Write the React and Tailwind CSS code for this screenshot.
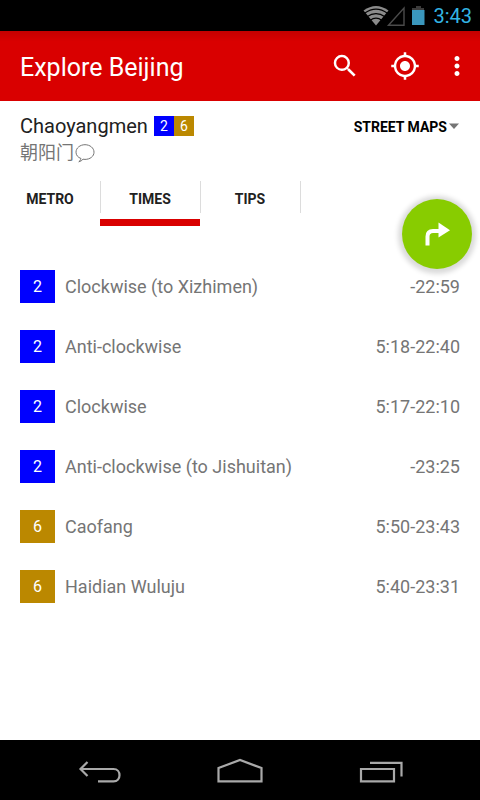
import React, { useState } from "react";
import { MdSearch, MdMyLocation, MdMoreVert } from "react-icons/md";

const TIMES = [
  { line: 2, name: "Clockwise (to Xizhimen)", hours: "-22:59" },
  { line: 2, name: "Anti-clockwise", hours: "5:18-22:40" },
  { line: 2, name: "Clockwise", hours: "5:17-22:10" },
  { line: 2, name: "Anti-clockwise (to Jishuitan)", hours: "-23:25" },
  { line: 6, name: "Caofang", hours: "5:50-23:43" },
  { line: 6, name: "Haidian Wuluju", hours: "5:40-23:31" },
];

const LINE_COLORS = { 2: "bg-[#0000ff]", 6: "bg-[#bb8800]" };

function StatusBar() {
  return (
    <div className="flex h-[31px] items-center justify-end bg-black pr-2 text-[#33b5e5]">
      <svg className="h-8 w-[64px]" viewBox="0 0 64 32" aria-hidden="true">
        <path d="M2.500 10.500 Q15 1.500 27.500 10.500 L15 25.500Z" fill="#8b8b8b" />
        <path d="M3.500 13.200 Q15 5 26.500 13.200 M6 16.800 Q15 10.500 24 16.800 M9 20.400 Q15 16 21 20.400" fill="none" stroke="#000" strokeWidth="1.200" />
        <path d="M27.500 25.300 L43 8 V25.300Z" fill="none" stroke="#4b4b4b" strokeWidth="1.400" />
        <path d="M55 6h5v2h3v2H51V8h4z" fill="#3c3c3c" />
        <path d="M51 10h12.500v15H51z" fill="#3a97bd" />
      </svg>
      <span className="ml-2 text-[20px] leading-8">3:43</span>
    </div>
  );
}

function Header() {
  return (
    <header className="flex h-[70px] items-center bg-linear-to-b from-[#c40000] to-[#d90000] to-15% pr-2 pl-5 text-white">
      <h1 className="flex-1 pt-1 text-[25px] leading-8">Explore Beijing</h1>
      <button type="button" aria-label="Search" className="mr-[30px]">
        <MdSearch size={30} />
      </button>
      <button type="button" aria-label="My location" className="mr-[22px]">
        <MdMyLocation size={30} />
      </button>
      <button type="button" aria-label="More options">
        <MdMoreVert size={30} />
      </button>
    </header>
  );
}

function Station() {
  return (
    <section className="flex items-start justify-between px-5 pt-3">
      <div>
        <div className="flex h-[26px] items-center">
          <h2 className="mr-[6px] text-[20px] leading-6 text-[#212121]">Chaoyangmen</h2>
          <span className="h-5 w-5 bg-[#0000ff] text-center text-[14px] leading-5 text-white">2</span>
          <span className="h-5 w-5 bg-[#bb8800] text-center text-[14px] leading-5 text-white">6</span>
        </div>
        <div className="flex h-7 items-center text-[#757575]">
          <span className="text-[18px] leading-7" lang="zh">朝阳门</span>
          <button type="button" aria-label="Pronounce" className="ml-px">
            <svg width="20" height="20" viewBox="0 0 20 20" fill="none" stroke="currentColor" strokeWidth="1" aria-hidden="true">
              <path d="M6 15.500C3 14.500 1 12.200 1 9.200c0-4.200 4-7.500 9-7.500s9 3.300 9 7.500-4 7.200-9 7.200c-.7 0-1.400-.1-2-.2-1 1.300-2.300 2.100-4.200 2.600 1.200-1 2-2.100 2.200-3.300z" />
            </svg>
          </button>
        </div>
      </div>
      <button type="button" className="flex h-7 items-center text-[14px] leading-7 font-bold text-black">
        STREET MAPS
        <svg className="ml-[2px]" width="11" height="8" viewBox="0 0 11 8" aria-hidden="true">
          <path d="M0 .5h10L5 6z" fill="#757575" />
        </svg>
      </button>
    </section>
  );
}

function Tabs() {
  const [active, setActive] = useState("TIMES");
  return (
    <div role="tablist" className="mt-[14px] flex">
      {["METRO", "TIMES", "TIPS"].map((tab) => (
        <button
          key={tab}
          type="button"
          role="tab"
          aria-selected={tab === active}
          onClick={() => setActive(tab)}
          className="w-[100px] text-[14px] font-bold text-[#212121]"
        >
          <span className="-mr-px block border-r border-[#dcdcdc] pt-1 leading-7">{tab}</span>
          <span className={tab === active ? "mt-[6px] block h-[7px] bg-[#d90000]" : "mt-[6px] block h-[7px]"} />
        </button>
      ))}
    </div>
  );
}

function NavBar() {
  return (
    <nav className="mt-auto flex h-[60px] items-center justify-center gap-[92px] bg-black text-[#a9a9a9]">
      <button type="button" aria-label="Back">
        <svg width="48" height="32" viewBox="0 0 48 32" fill="none" stroke="currentColor" strokeWidth="2.200" aria-hidden="true">
          <path d="M11.500 8 L4.500 15 L11.500 22 M5 15 H37.500 C41.500 15 43.500 18 43.500 21.200 C43.500 24.500 41.500 27.300 37.500 27.300 H22" />
        </svg>
      </button>
      <button type="button" aria-label="Home">
        <svg width="48" height="32" viewBox="0 0 48 32" fill="none" stroke="currentColor" strokeWidth="2.200" aria-hidden="true">
          <path d="M2.500 27.300 V14 L24 6 L45.500 14 V27.300Z" />
        </svg>
      </button>
      <button type="button" aria-label="Recent apps">
        <svg width="48" height="32" viewBox="0 0 48 32" fill="none" stroke="currentColor" strokeWidth="2.200" aria-hidden="true">
          <path d="M5 15h33v12.300H5z M14 8.800H45.500V22.500" />
        </svg>
      </button>
    </nav>
  );
}

export default function App() {
  return (
    <div className="flex min-h-screen flex-col bg-white font-['Roboto','Noto_Sans_CJK_SC',sans-serif]">
      <StatusBar />
      <Header />
      <main className="relative">
        <Station />
        <Tabs />
        <button
          type="button"
          aria-label="Directions"
          className="absolute top-[98px] right-2 flex h-[70px] w-[70px] items-center justify-center rounded-full bg-[#88cc00] shadow-[0_1px_5px_4px_rgba(0,0,0,0.15)]"
        >
          <svg width="32" height="32" viewBox="0 0 32 32" aria-hidden="true">
            <path d="M6.500 27.500v-9c0-3.500 2-5.500 5.500-5.500h6" fill="none" stroke="#fff" strokeWidth="4" />
            <path d="M17.500 4.500l11.500 7.700-11.500 7.300z" fill="#fff" />
          </svg>
        </button>
        <ul className="mt-[30px]">
          {TIMES.map((row) => (
            <li key={row.name} className="flex h-[60px] items-center px-5 text-[18px] text-[#757575]">
              <span className={`${LINE_COLORS[row.line]} mr-[10px] h-[33px] w-[35px] text-center text-[16px] leading-[34px] text-white`}>
                {row.line}
              </span>
              <span className="flex-1">{row.name}</span>
              <span>{row.hours}</span>
            </li>
          ))}
        </ul>
      </main>
      <NavBar />
    </div>
  );
}
